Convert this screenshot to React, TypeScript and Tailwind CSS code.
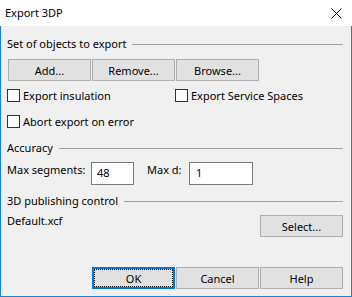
import type { ReactNode } from 'react';

const FONT = "font-['Noto_Sans',sans-serif]";

function GroupHead({ title, className = '' }: { title: string; className?: string }) {
  return (
    <div className={['flex items-center h-[16px]', className].join(' ')}>
      <span className="leading-[16px]">{title}</span>
      <div className="flex-1 h-px bg-[#a0a0a0] ml-[6px] mr-[1px]" />
    </div>
  );
}

function Btn({ children, focused = false }: { children: ReactNode; focused?: boolean }) {
  return (
    <button
      type="button"
      className={[
        'relative w-[83px] h-[22px] bg-[#e1e1e1] text-[11px] leading-none text-black',
        focused ? 'border-2 border-[#0078d7]' : 'border border-[#adadad]',
      ].join(' ')}
    >
      {focused ? <span className="absolute inset-0 border border-dotted border-black" /> : null}
      <span className="relative">{children}</span>
    </button>
  );
}

function Check({ label, className = '' }: { label: string; className?: string }) {
  return (
    <label className={['flex items-center h-[13px]', className].join(' ')}>
      <span className="w-[13px] h-[13px] border border-[#333333] bg-white shrink-0" />
      <span className="ml-[3px] leading-[16px]">{label}</span>
    </label>
  );
}

export default function App() {
  return (
    <div
      className={[
        'w-[352px] h-[297px] flex flex-col text-[11px] text-black whitespace-nowrap select-none',
        FONT,
      ].join(' ')}
    >
      {/* title bar */}
      <div className="h-[26px] bg-white flex items-center justify-between pl-[5px] pr-[10px] shrink-0">
        <span className="leading-[16px]">Export 3DP</span>
        <svg width="11" height="11" viewBox="0 0 11 11" className="mt-[1px]">
          <path d="M0.5 0.5 L10.5 10.5 M10.5 0.5 L0.5 10.5" stroke="#000" strokeWidth="1" />
        </svg>
      </div>

      <div className="flex-1 min-h-0 bg-[#f0f0f0] border-x border-b border-[#1883d7] pl-[6px] pr-[7px] flex flex-col">
        <GroupHead title="Set of objects to export" className="mt-[10px]" />

        <div className="flex gap-[1px] mt-[7px] ml-[1px]">
          <Btn>Add...</Btn>
          <Btn>Remove...</Btn>
          <Btn>Browse...</Btn>
        </div>

        <div className="flex mt-[8px]">
          <Check label="Export insulation" className="w-[168px]" />
          <Check label="Export Service Spaces" />
        </div>
        <Check label="Abort export on error" className="mt-[13px]" />

        <GroupHead title="Accuracy" className="mt-[12px]" />

        <div className="flex items-start mt-[6px]">
          <span className="leading-[16px] w-[84px]">Max segments:</span>
          <div className="w-[43px] h-[23px] bg-white border border-[#7a7a7a] pl-[5px] flex items-center">48</div>
          <span className="leading-[16px] ml-[13px] w-[42px]">Max d:</span>
          <div className="w-[64px] h-[23px] bg-white border border-[#7a7a7a] pl-[6px] flex items-center">1</div>
        </div>

        <GroupHead title="3D publishing control" className="mt-[8px]" />

        <div className="flex items-start justify-between mt-[6px] mr-[1px]">
          <span className="leading-[16px] -mt-[2px]">Default.xcf</span>
          <Btn>Select...</Btn>
        </div>

        <div className="flex justify-end gap-[1px] mt-[30px] mr-[1px]">
          <Btn focused>OK</Btn>
          <Btn>Cancel</Btn>
          <Btn>Help</Btn>
        </div>
      </div>
    </div>
  );
}
